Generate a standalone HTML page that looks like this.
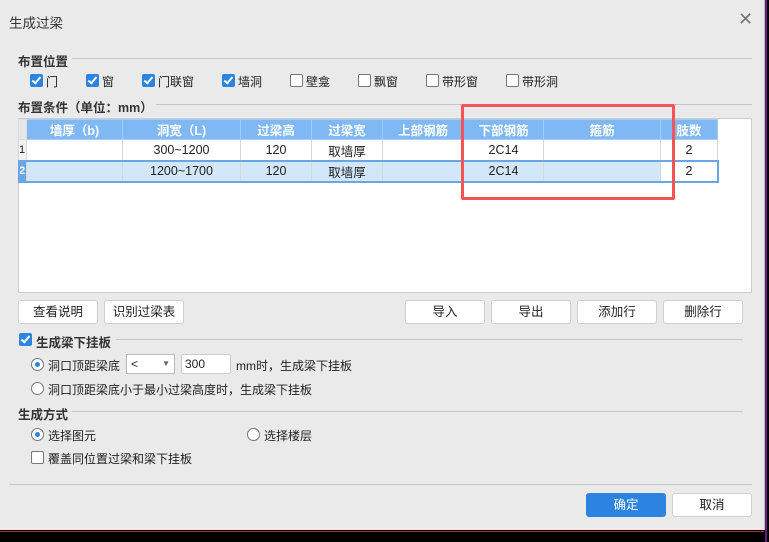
<!DOCTYPE html>
<html><head><meta charset="utf-8"><style>
body{margin:0;width:769px;height:542px;background:#000;position:relative;overflow:hidden;font-family:"Liberation Sans","Noto Sans CJK SC",sans-serif;font-size:12px;color:#222}
.dlg{position:absolute;left:0;top:0;width:764px;height:530px;background:#eaeaea;border-right:1px solid #bbb}
.a{position:absolute;white-space:nowrap}
.sec{font-weight:bold;color:#333;font-size:12.5px}
.line{position:absolute;height:1px;background:#c6c6c6}
.cb{position:absolute;width:13px;height:13px;border-radius:2px;box-sizing:border-box}
.on{background:#2d84e0}
.on:after{content:"";position:absolute;left:4px;top:1px;width:3px;height:7px;border:solid #fff;border-width:0 2px 2px 0;transform:rotate(40deg)}
.off{background:#fff;border:1px solid #777}
.rad{position:absolute;width:13px;height:13px;border-radius:50%;border:1px solid #777;background:#fff;box-sizing:border-box}
.rad.s:after{content:"";position:absolute;left:3px;top:3px;width:5px;height:5px;border-radius:50%;background:#2d84e0}
.btn{position:absolute;height:24px;background:#fff;border:1px solid #d0d0d0;border-radius:3px;box-sizing:border-box;text-align:center;line-height:22px;font-size:12.5px}
table{border-collapse:collapse;position:absolute;left:18px;top:119px;font-size:12.5px}
td{height:20px;border:1px solid #d8d8d8;text-align:center;padding:0}
th{height:19px;background:#7fb8f5;color:#fff;font-weight:bold;border:1px solid #a6cdf7;padding:0}
</style></head><body>
<div class="dlg">
<div class="a" style="left:9px;top:12px;font-size:13.5px;color:#333">生成过梁</div>
<div class="a" style="left:738px;top:9px;font-size:18px;color:#777">✕</div>
<div class="a sec" style="left:18px;top:51px">布置位置</div><div class="line" style="left:72px;top:58px;width:680px"></div>
<div class="cb on" style="left:30px;top:74px"></div><div class="a" style="left:46px;top:73px">门</div>
<div class="cb on" style="left:86px;top:74px"></div><div class="a" style="left:102px;top:73px">窗</div>
<div class="cb on" style="left:142px;top:74px"></div><div class="a" style="left:158px;top:73px">门联窗</div>
<div class="cb on" style="left:222px;top:74px"></div><div class="a" style="left:238px;top:73px">墙洞</div>
<div class="cb off" style="left:290px;top:74px"></div><div class="a" style="left:306px;top:73px">壁龛</div>
<div class="cb off" style="left:358px;top:74px"></div><div class="a" style="left:374px;top:73px">飘窗</div>
<div class="cb off" style="left:426px;top:74px"></div><div class="a" style="left:442px;top:73px">带形窗</div>
<div class="cb off" style="left:506px;top:74px"></div><div class="a" style="left:522px;top:73px">带形洞</div>
<div class="a sec" style="left:18px;top:97px">布置条件（单位：mm）</div><div class="line" style="left:156px;top:104px;width:596px"></div>
<div class="a" style="left:18px;top:118px;width:734px;height:175px;background:#fff;border:1px solid #ccc;box-sizing:border-box"></div>
<table>
<tr><th style="width:7px;background:#e6e6e6;border-color:#ddd"></th><th style="width:95px">墙厚（b)</th><th style="width:117px">洞宽（L)</th><th style="width:70px">过梁高</th><th style="width:70px">过梁宽</th><th style="width:80px">上部钢筋</th><th style="width:79px">下部钢筋</th><th style="width:116px">箍筋</th><th style="width:56px">肢数</th></tr>
<tr><td style="background:#f2f2f2;text-align:left;font-size:11px">1</td><td></td><td>300~1200</td><td>120</td><td>取墙厚</td><td></td><td>2C14</td><td></td><td>2</td></tr>
<tr style="background:#d3e7fb;outline:2px solid #6aa6e6;outline-offset:-1px"><td style="background:#6aa6e6;color:#fff;text-align:left;font-size:11px;font-weight:bold">2</td><td></td><td>1200~1700</td><td>120</td><td>取墙厚</td><td></td><td>2C14</td><td></td><td style="background:#fff">2</td></tr>
</table>
<div class="a" style="left:461px;top:104px;width:214px;height:96px;border:3px solid #f25555;box-sizing:border-box;border-radius:2px"></div>
<div class="btn" style="left:18px;top:300px;width:80px">查看说明</div>
<div class="btn" style="left:104px;top:300px;width:80px">识别过梁表</div>
<div class="btn" style="left:405px;top:300px;width:80px">导入</div>
<div class="btn" style="left:491px;top:300px;width:80px">导出</div>
<div class="btn" style="left:577px;top:300px;width:80px">添加行</div>
<div class="btn" style="left:663px;top:300px;width:80px">删除行</div>
<div class="cb on" style="left:19px;top:333px"></div><div class="a sec" style="left:36px;top:332px">生成梁下挂板</div><div class="line" style="left:116px;top:339px;width:627px"></div>
<div class="rad s" style="left:31px;top:358px"></div><div class="a" style="left:48px;top:357px">洞口顶距梁底</div>
<div class="a" style="left:126px;top:354px;width:49px;height:20px;background:#fff;border:1px solid #bbb;box-sizing:border-box;padding-left:4px;line-height:18px">&lt;<span style="position:absolute;right:4px;font-size:8px;color:#666">▼</span></div>
<div class="a" style="left:181px;top:354px;width:50px;height:20px;background:#fff;border:1px solid #ccc;box-sizing:border-box;padding-left:3px;line-height:18px;border-radius:2px">300</div>
<div class="a" style="left:236px;top:357px">mm时，生成梁下挂板</div>
<div class="rad" style="left:31px;top:382px"></div><div class="a" style="left:48px;top:381px">洞口顶距梁底小于最小过梁高度时，生成梁下挂板</div>
<div class="a sec" style="left:18px;top:404px">生成方式</div><div class="line" style="left:72px;top:411px;width:671px"></div>
<div class="rad s" style="left:31px;top:428px"></div><div class="a" style="left:48px;top:427px">选择图元</div>
<div class="rad" style="left:247px;top:428px"></div><div class="a" style="left:264px;top:427px">选择楼层</div>
<div class="cb off" style="left:31px;top:451px"></div><div class="a" style="left:48px;top:450px">覆盖同位置过梁和梁下挂板</div>
<div class="line" style="left:9px;top:484px;width:743px"></div>
<div class="btn" style="left:586px;top:493px;width:80px;background:#2d84e0;border-color:#2d84e0;color:#fff">确定</div>
<div class="btn" style="left:672px;top:493px;width:80px">取消</div>
</div>
<div class="a" style="left:0;top:531px;width:764px;height:1px;background:#a33"></div>
<div class="a" style="left:765px;top:0;width:2px;height:542px;background:#6a1a7a"></div>
</body></html>
